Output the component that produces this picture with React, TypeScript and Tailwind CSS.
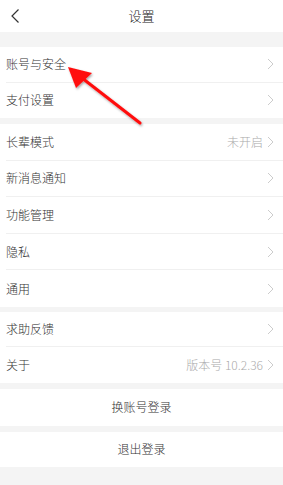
import React from "react";

type Item = { label: string; value?: string };

function Chevron() {
  return (
    <svg width="7" height="12" viewBox="0 0 7 12" className="ml-1 shrink-0">
      <path d="M1 1l5 5-5 5" fill="none" stroke="#cccccc" strokeWidth="1" />
    </svg>
  );
}

function Group({ items, rowH }: { items: Item[]; rowH: string }) {
  return (
    <div className="bg-white">
      {items.map((it, i) => (
        <div key={it.label} className="pl-[6px]">
          <div
            className={`flex items-center justify-between pr-[9px] ${rowH} ${
              i < items.length - 1 ? "border-b border-[#f0f0f0]" : ""
            }`}
          >
            <span className="text-[12px] font-light text-[#333333]">{it.label}</span>
            <div className="flex items-center">
              {it.value && <span className="text-[12px] font-light text-[#aaaaaa]">{it.value}</span>}
              <Chevron />
            </div>
          </div>
        </div>
      ))}
    </div>
  );
}

export default function App() {
  return (
    <div
      className="relative w-[283px] h-[485px] bg-[#f4f4f4] overflow-hidden"
      style={{ fontFamily: '"Noto Sans CJK SC", "Noto Sans", sans-serif' }}
    >
      <div className="relative flex items-center justify-center h-[32px] bg-white">
        <svg width="10" height="16" viewBox="0 0 10 16" className="absolute left-[10px] top-[8px]">
          <path d="M8.5 1.5L2 8l6.5 6.5" fill="none" stroke="#333" strokeWidth="1.2" />
        </svg>
        <span className="text-[13px] font-light text-[#222222]">设置</span>
      </div>

      <div className="mt-[15px]">
        <Group rowH="h-[35.5px]" items={[{ label: "账号与安全" }, { label: "支付设置" }]} />
      </div>

      <div className="mt-[6px]">
        <Group
          rowH="h-[36.6px]"
          items={[
            { label: "长辈模式", value: "未开启" },
            { label: "新消息通知" },
            { label: "功能管理" },
            { label: "隐私" },
            { label: "通用" },
          ]}
        />
      </div>

      <div className="mt-[5px]">
        <Group
          rowH="h-[35.5px]"
          items={[{ label: "求助反馈" }, { label: "关于", value: "版本号 10.2.36" }]}
        />
      </div>

      <div className="mt-[6px] flex h-[37px] items-center justify-center bg-white text-[12px] font-light text-[#333333]">
        换账号登录
      </div>
      <div className="mt-[6px] flex h-[35px] items-center justify-center bg-white text-[12px] font-light text-[#333333]">
        退出登录
      </div>

      <svg className="absolute left-0 top-0 pointer-events-none" width="283" height="485" viewBox="0 0 283 485">
        <defs>
          <filter id="sh" x="-20%" y="-20%" width="140%" height="140%">
            <feDropShadow dx="1" dy="1.5" stdDeviation="1.2" floodColor="#000" floodOpacity="0.35" />
          </filter>
        </defs>
        <g filter="url(#sh)">
          <line x1="140" y1="123" x2="82" y2="78" stroke="#ff0d0d" strokeWidth="3" strokeLinecap="round" />
          <polygon points="68,67 92,73 76,88" fill="#ff0d0d" />
        </g>
      </svg>
    </div>
  );
}
